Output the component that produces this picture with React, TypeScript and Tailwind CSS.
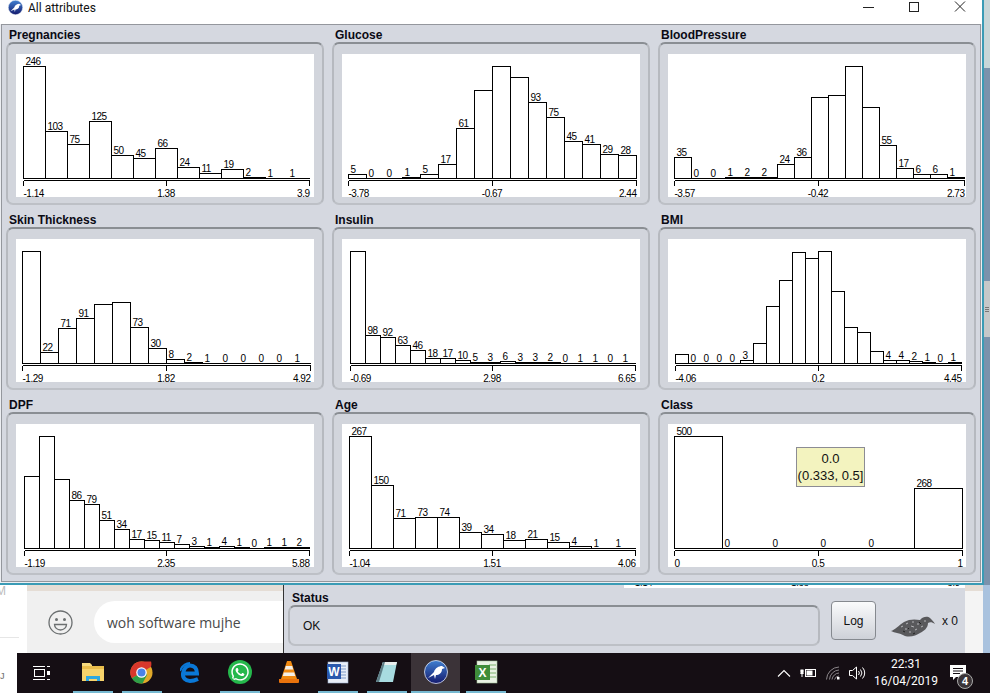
import { FaWhatsapp } from 'react-icons/fa';

type Chart = {
  title: string;
  x0: number;
  w: number;
  heights: number[];
  labels: (number | null)[];
  axis: [string, string, string];
};

const charts: Chart[] = [
  {
    title: 'Pregnancies',
    x0: 7,
    w: 22,
    heights: [112, 47, 34, 57, 23, 20, 30, 11, 5, 9, 1, 0, 0],
    labels: [246, 103, 75, 125, 50, 45, 66, 24, 11, 19, 2, 1, 1],
    axis: ['-1.14', '1.38', '3.9'],
  },
  {
    title: 'Glucose',
    x0: 6,
    w: 18,
    heights: [4, 0, 0, 1, 4, 14, 50, 88, 112, 101, 76, 61, 37, 34, 24, 23],
    labels: [5, 0, 0, 1, 5, 17, 61, null, null, null, 93, 75, 45, 41, 29, 28],
    axis: ['-3.78', '-0.67', '2.44'],
  },
  {
    title: 'BloodPressure',
    x0: 6.3,
    w: 17.04,
    heights: [21, 0, 0, 1, 1, 1, 14, 21, 81, 83, 112, 71, 33, 10, 4, 4, 1],
    labels: [35, 0, 0, 1, 2, 2, 24, 36, null, null, null, null, 55, 17, 6, 6, 1],
    axis: ['-3.57', '-0.42', '2.73'],
  },
  {
    title: 'Skin Thickness',
    x0: 6,
    w: 18,
    heights: [112, 11, 35, 45, 59, 61, 36, 15, 4, 1, 0, 0, 0, 0, 0, 0],
    labels: [null, 22, 71, 91, null, null, 73, 30, 8, 2, 1, 0, 0, 0, 0, 1],
    axis: ['-1.29', '1.82', '4.92'],
  },
  {
    title: 'Insulin',
    x0: 8,
    w: 15,
    heights: [112, 28, 26, 18, 13, 5, 5, 3, 1, 1, 2, 1, 1, 1, 0, 0, 0, 0, 0],
    labels: [null, 98, 92, 63, 46, 18, 17, 10, 5, 3, 6, 3, 3, 2, 0, 1, 1, 0, 1],
    axis: ['-0.69', '2.98', '6.65'],
  },
  {
    title: 'BMI',
    x0: 7,
    w: 13,
    heights: [9, 0, 0, 0, 0, 3, 20, 57, 83, 111, 105, 112, 72, 36, 31, 12, 3, 3, 2, 1, 0, 1],
    labels: [null, 0, 0, 0, 0, 3, null, null, null, null, null, null, null, null, null, null, 4, 4, 2, 1, 0, 1],
    axis: ['-4.06', '0.2', '4.45'],
  },
  {
    title: 'DPF',
    x0: 8,
    w: 15,
    heights: [72, 112, 69, 48, 44, 28, 19, 9, 8, 6, 4, 2, 1, 2, 1, 0, 1, 1, 1],
    labels: [null, null, null, 86, 79, 51, 34, 17, 15, 11, 7, 3, 1, 4, 1, 0, 1, 1, 2],
    axis: ['-1.19', '2.35', '5.88'],
  },
  {
    title: 'Age',
    x0: 7,
    w: 22,
    heights: [112, 63, 30, 31, 31, 16, 14, 8, 9, 6, 2, 0, 0],
    labels: [267, 150, 71, 73, 74, 39, 34, 18, 21, 15, 4, 1, 1],
    axis: ['-1.04', '1.51', '4.06'],
  },
  {
    title: 'Class',
    x0: 6,
    w: 48,
    heights: [112, 0, 0, 0, 0, 60],
    labels: [500, 0, 0, 0, 0, 268],
    axis: ['0', '0.5', '1'],
  },
];

const BASE = 124.5;
const AXIS = 126.5;

function Histogram({ chart }: { chart: Chart }) {
  const { x0, w, heights, labels, axis } = chart;
  const px = (i: number) => Math.round(x0 + i * w) + 0.5;
  const right = px(heights.length);
  return (
    <svg width="298" height="143" className="block bg-white text-[10px] tracking-[-0.5px]">
      <g fill="white" stroke="black" shapeRendering="crispEdges">
        {heights.map((h, i) =>
          h > 0 ? <rect key={i} x={px(i)} y={BASE - h} width={px(i + 1) - px(i)} height={h} /> : null,
        )}
        <line x1={px(0)} x2={right} y1={BASE} y2={BASE} />
        <line x1={px(0)} x2={right} y1={AXIS} y2={AXIS} />
        <line x1={px(0)} x2={px(0)} y1={AXIS} y2={131.5} />
        <line x1={150.5} x2={150.5} y1={AXIS} y2={131.5} />
        <line x1={right} x2={right} y1={AXIS} y2={131.5} />
      </g>
      <g fill="black">
        {labels.map((l, i) =>
          l === null ? null : (
            <text key={i} x={px(i) + 2} y={BASE - heights[i] - 1.5}>
              {l}
            </text>
          ),
        )}
        <text x={px(0)} y={143}>{axis[0]}</text>
        <text x={150} y={143} textAnchor="middle">{axis[1]}</text>
        <text x={right} y={143} textAnchor="end">{axis[2]}</text>
      </g>
    </svg>
  );
}

function GroupBox({ chart }: { chart: Chart }) {
  return (
    <div className="w-[318px]">
      <div className="h-[15px] pl-[3px] text-[12px] leading-[17px] font-bold text-[#0a0a14]">{chart.title}</div>
      <div className="relative h-[163px] rounded-[7px] border-2 border-t-[#8a8e93] border-x-[#b6b9bf] border-b-[#bdc0c6] bg-[#d2d5dc] pl-2 pt-[10px]">
        <Histogram chart={chart} />
        {chart.title === 'Class' && (
          <div className="absolute left-[136px] top-[33px] flex h-[40px] w-[69px] flex-col items-center justify-center border border-[#8c8c94] bg-[#f3f3bf] text-[13px] leading-[17px] text-[#111]">
            <span>0.0</span>
            <span>(0.333, 0.5]</span>
          </div>
        )}
      </div>
    </div>
  );
}

function WekaIcon({ size }: { size: number }) {
  return (
    <svg width={size} height={size} viewBox="0 0 24 24">
      <defs>
        <linearGradient id="wekaBlue" x1="0" y1="0" x2="0" y2="1">
          <stop offset="0" stopColor="#3f7fd0" />
          <stop offset="1" stopColor="#141a6e" />
        </linearGradient>
      </defs>
      <circle cx="12" cy="12" r="11.5" fill="url(#wekaBlue)" stroke="#dfe6f2" strokeWidth="0.8" />
      <path d="M4 18 L10 12 C11 8 15 6 18 6 L21 8 L18 9 C18 13 15 15 12 15 L11 19 L10 15 Z" fill="white" />
    </svg>
  );
}

function TaskView() {
  return (
    <svg width="18" height="16" viewBox="0 0 18 16" fill="none" stroke="white">
      <rect x="1.5" y="4.5" width="10" height="7" />
      <path d="M0 1.5h12M0 14.5h12" />
      <path d="M14 1.5h3M14 14.5h3" />
      <rect x="14" y="6" width="3" height="4" fill="white" stroke="none" />
    </svg>
  );
}

function Explorer() {
  return (
    <svg width="22" height="20" viewBox="0 0 22 20">
      <path d="M0 1h8l2 2h0v3H0z" fill="#f5d97e" />
      <rect x="0" y="4" width="22" height="15" fill="#f7d36b" />
      <rect x="0" y="4" width="22" height="3" fill="#e9bd4c" />
      <path d="M4 14h14v5h-3v-2H7v2H4z" fill="#2fa8e0" />
    </svg>
  );
}

function Chrome() {
  return (
    <svg width="23" height="23" viewBox="0 0 24 24">
      <circle cx="12" cy="12" r="11.5" fill="#e0a82a" />
      <path d="M12 12 L2 18 A11.5 11.5 0 0 1 12 .5 H22 A11.5 11.5 0 0 1 22 6 Z" fill="#d8372c" />
      <path d="M12 12 L2 18 A11.5 11.5 0 0 0 13 23.5 L18 14 Z" fill="#2f9e48" />
      <circle cx="12" cy="12" r="5.5" fill="white" />
      <circle cx="12" cy="12" r="4.2" fill="#4a83e8" />
    </svg>
  );
}

function Edge() {
  return (
    <svg width="21" height="21" viewBox="0 0 21 21" fill="none" stroke="#0a78d8" strokeWidth="4">
      <path d="M4 11.5h13c0-5-2.5-8-7-8-3.5 0-6 3-7 8-.5 4.5 2.5 7.5 7 7.5 3 0 5-.6 8-2" />
      <path d="M0 9C2 4 6 1 10 1" strokeWidth="2" />
    </svg>
  );
}

function Vlc() {
  return (
    <svg width="22" height="24" viewBox="0 0 22 24">
      <path d="M9 1h4l6 18H3z" fill="#f08a12" />
      <path d="M7.8 6h6.4l1 3.5H6.8zM5.8 12.5h10.4l1 3.5H4.8z" fill="#f3efe8" />
      <path d="M1 19h20v3a1 1 0 0 1-1 1H2a1 1 0 0 1-1-1z" fill="#e9720c" />
    </svg>
  );
}

function Word() {
  return (
    <svg width="24" height="24" viewBox="0 0 24 24">
      <rect x="2" y="2" width="20" height="21" fill="#e8eef8" stroke="#9fb2d0" strokeWidth="0.6" />
      <path d="M14 6h6M14 9h6M14 12h6M14 15h6M14 18h6" stroke="#7f9bc9" />
      <rect x="1" y="4" width="14" height="15" fill="#2a58ad" />
      <text x="8" y="16" textAnchor="middle" fill="white" fontSize="12" fontWeight="700">W</text>
    </svg>
  );
}

function Notepad() {
  return (
    <svg width="24" height="22" viewBox="0 0 24 22">
      <path d="M8 1h14l-4 20H1z" fill="#a8dbe0" />
      <path d="M8 1h14l-1 3H7z" fill="#e9eeee" />
      <path d="M1 21L8 1l2 0L4 21z" fill="#5d7d86" />
    </svg>
  );
}

function Excel() {
  return (
    <svg width="24" height="24" viewBox="0 0 24 24">
      <rect x="3" y="1" width="20" height="22" fill="#e9f2e4" stroke="#a4c39a" strokeWidth="0.6" />
      <path d="M15 5h7M15 9h7M15 13h7M15 17h7" stroke="#7db16c" />
      <rect x="1" y="5" width="15" height="15" fill="#3f8d3a" />
      <text x="8.5" y="17" textAnchor="middle" fill="white" fontSize="12" fontWeight="700">X</text>
    </svg>
  );
}

const tiles = [
  { key: 'explorer', node: <Explorer />, open: true },
  { key: 'chrome', node: <Chrome />, open: true },
  { key: 'edge', node: <Edge />, open: false },
  {
    key: 'whatsapp',
    node: <FaWhatsapp className="rounded-full bg-[#25b84c] p-[2px] text-[24px] text-white" />,
    open: true,
  },
  { key: 'vlc', node: <Vlc />, open: false },
  { key: 'word', node: <Word />, open: true },
  { key: 'notepad', node: <Notepad />, open: true },
];

function Tile({ node, open, active }: { node: React.ReactNode; open: boolean; active?: boolean }) {
  return (
    <div className={`flex h-10 w-[49px] flex-col items-center ${active ? 'bg-[#3b3338]' : ''}`}>
      <div className="flex h-[38px] items-center justify-center">{node}</div>
      <div className={`h-[2px] ${active ? 'w-[49px]' : 'w-10'} ${open ? 'bg-[#76b9d1]' : ''}`} />
    </div>
  );
}

function Tray() {
  return (
    <div className="ml-auto flex h-10 items-center text-white">
      <svg width="14" height="8" viewBox="0 0 14 8" fill="none" stroke="white" strokeWidth="1.1" className="mr-[10px]">
        <path d="M1 7.5L7 1.5L13 7.5" />
      </svg>
      <svg width="16" height="12" viewBox="0 0 16 12" fill="none" stroke="white" className="mr-[10px] -ml-[1px]">
        <rect x="5.5" y="2.5" width="10" height="7" />
        <rect x="6.5" y="3.5" width="6" height="5" fill="white" stroke="none" />
        <path d="M0.5 4h3M0.5 6.5h3M2 7v3" />
        <rect x="0.5" y="2.5" width="3" height="4" fill="white" stroke="none" />
      </svg>
      <svg width="14" height="14" viewBox="0 0 14 14" fill="none" stroke="#8b868a" className="mr-[9px]">
        <path d="M0.5 13.5A13 13 0 0 1 13 1M3.5 13.5A10 10 0 0 1 13 4M6 13.5A7.5 7.5 0 0 1 13 7M8.5 13.5A5 5 0 0 1 13 10" />
        <rect x="11" y="11" width="2.5" height="2.5" fill="white" stroke="none" />
      </svg>
      <svg width="17" height="14" viewBox="0 0 17 14" fill="none" stroke="white" className="mr-[10px]">
        <path d="M0.5 4.5h3l4-3.5v12l-4-3.5h-3z" />
        <path d="M9.5 5a3 3 0 0 1 0 4M11.5 3.5a5.5 5.5 0 0 1 0 7M13.5 1.5a8 8 0 0 1 0 11" />
      </svg>
      <div className="flex w-[60px] flex-col items-center text-[12px] leading-[17px] font-['Roboto',sans-serif]">
        <span>22:31</span>
        <span>16/04/2019</span>
      </div>
      <div className="relative ml-[13px] mr-[15px] h-10 w-[26px]">
        <svg width="17" height="16" viewBox="0 0 17 16" className="absolute left-[1px] top-[12px]">
          <path d="M0 0h16v12H6l-3 3v-3H0z" fill="white" />
          <path d="M3 3.5h10M3 6h10M3 8.5h7" stroke="#150e14" />
        </svg>
        <span className="absolute left-[8px] top-[20px] flex h-[16px] w-[16px] items-center justify-center rounded-full border border-[#aaa] bg-[#3a3438] text-[11px] font-bold">
          4
        </span>
      </div>
    </div>
  );
}

function Smiley() {
  return (
    <svg width="25" height="25" viewBox="0 0 25 25" fill="none" stroke="#6b6f70" strokeWidth="1.3">
      <circle cx="12.5" cy="12.5" r="11.5" />
      <circle cx="8.5" cy="9.5" r="1.5" fill="#6b6f70" stroke="none" />
      <circle cx="16.5" cy="9.5" r="1.5" fill="#6b6f70" stroke="none" />
      <path d="M6.5 14.5h12a6 5.5 0 0 1-12 0z" />
    </svg>
  );
}

function Bird() {
  return (
    <svg width="44" height="22" viewBox="0 0 44 22">
      <path
        d="M0 15 C4 14 8 9 13 6 C18 3 24 3 29 4 C32 0 37 0 39 2 C41 4 43 6 44 8 C41 6 39 6 37 7 C37 12 33 15 29 17 C25 20 17 22 12 19 C8 17 4 17 0 15 Z"
        fill="#59595c"
      />
      <path d="M10 11l2-1M15 8l2-1M21 6l2 0M14 13l2 0M20 10l3 1M26 8l2 0M18 16l2 0M24 14l2-1M30 11l2-1M33 5l2 0" stroke="#b5b5b8" />
      <path d="M12 15l2 1M22 18l2-1M28 6l2 2M17 12l1 1" stroke="#222" />
    </svg>
  );
}

export default function App() {
  return (
    <div className="flex h-[693px] w-[990px] flex-col overflow-hidden bg-white font-['Liberation_Sans',sans-serif] text-black">
      <div className="flex h-[585px]">
        {/* All attributes window */}
        <div className="flex w-[984px] flex-col border-r-2 border-b-2 border-[#3a9bb5] bg-[#eceef2]">
          <div className="flex h-6 items-start bg-white pl-2 text-[#111]">
            <WekaIcon size={15} />
            <span className="ml-[5px] mt-[1px] text-[12px] leading-[14px] font-['Roboto',sans-serif]">All attributes</span>
            <div className="ml-auto flex items-start">
              <svg width="11" height="15" viewBox="0 0 11 15" stroke="#222" className="mr-[35px]">
                <path d="M0 7.5h11" />
              </svg>
              <svg width="10" height="15" viewBox="0 0 10 15" fill="none" stroke="#222" className="mr-[35px]">
                <rect x="0.5" y="2.5" width="9" height="9" />
              </svg>
              <svg width="12" height="15" viewBox="0 0 12 15" fill="none" stroke="#222" className="mr-[16px]">
                <path d="M1 1.5L11 11.5M11 1.5L1 11.5" />
              </svg>
            </div>
          </div>
          <div className="ml-[1px] mr-[1px] h-[558px] border border-[#94979d] bg-[#d5d8e0] pl-1 pt-[2px]">
            <div className="grid grid-cols-[318px_318px_318px] gap-x-2 gap-y-[7px]">
              {charts.map((c) => (
                <GroupBox key={c.title} chart={c} />
              ))}
            </div>
          </div>
        </div>
        {/* Desktop window behind, scrollbar strip */}
        <div className="flex w-[6px] flex-col">
          <div className="h-[68px] bg-[#c8d6d8]" />
          <div className="h-[213px] bg-[#7b92ac]" />
          <div className="flex h-[56px] flex-col items-center justify-center gap-[1px] bg-[#c6c8c9]">
            <div className="h-px w-1 bg-[#777]" />
            <div className="h-px w-1 bg-[#777]" />
            <div className="h-px w-1 bg-[#777]" />
          </div>
          <div className="h-[248px] bg-[#7b92ac]" />
        </div>
      </div>

      <div className="flex h-[68px]">
        <div className="relative w-[27px] overflow-hidden bg-white">
          <span className="absolute -left-[4px] -top-[3px] text-[12px] text-[#bbb]">M</span>
          <div className="mx-0 mt-[52px] h-px w-[19px] bg-[#e6e6e6]" />
        </div>
        <div className="w-[256px] bg-[#f0f0f0]">
          <div className="h-[6px] bg-[#e5ddd5]" />
          <div className="flex items-center pl-[21px] pt-[10px]">
            <Smiley />
            <div className="ml-[21px] flex h-[42px] flex-1 items-center rounded-l-full bg-white pl-[13px] font-['Open_Sans',sans-serif] text-[14px] text-[#4a4a4a]">
              woh software mujhe
            </div>
          </div>
        </div>
        <div className="w-[682px] border-l border-[#333] bg-[#d5d8e0]">
          <div className="ml-[340px] flex h-[3px] items-end justify-between overflow-hidden bg-white pl-[8px] pr-[5px] text-[9px] leading-[9px] text-black">
            <span>-1.14</span>
            <span>1.38</span>
            <span>3.9</span>
          </div>
          <div className="pl-2 pt-[3px] text-[12px] leading-[14px] font-bold text-[#0a0a14]">Status</div>
          <div className="flex items-start">
            <div className="ml-1 flex h-[41px] w-[532px] items-center rounded-[7px] border-2 border-t-[#8a8e93] border-x-[#b6b9bf] border-b-[#bdc0c6] pl-[13px] text-[12px] text-[#111]">
              OK
            </div>
            <button className="ml-[11px] -mt-[4px] h-[39px] w-[45px] rounded-[4px] border border-[#85898f] bg-gradient-to-b from-[#fafbfc] to-[#ced1d8] text-[12px] text-[#111]">
              Log
            </button>
            <div className="ml-[15px] mt-[11px]"><Bird /></div>
            <span className="ml-[7px] mt-[9px] text-[12px] leading-[15px] text-[#111]">x 0</span>
          </div>
        </div>
        <div className="flex w-[25px]">
          <div className="w-[18px] bg-[#f4f4f4]">
            <div className="h-[6px] bg-[#e5ddd5]" />
          </div>
          <div className="w-[7px] bg-[#a9c2de]" />
        </div>
      </div>

      <div className="flex h-10 bg-[#150e14]">
        <div className="w-[17px] bg-white pl-0 pt-4 text-[11px] leading-[12px] text-[#777]">ᴊ</div>
        <div className="flex w-[49px] items-center justify-center pl-[1px]">
          <TaskView />
        </div>
        <div className="flex pl-[2px]">
          {tiles.map((t) => (
            <Tile key={t.key} node={t.node} open={t.open} />
          ))}
          <Tile node={<WekaIcon size={24} />} open active />
          <div className="w-[1px]" />
          <Tile node={<Excel />} open />
        </div>
        <Tray />
      </div>
    </div>
  );
}
